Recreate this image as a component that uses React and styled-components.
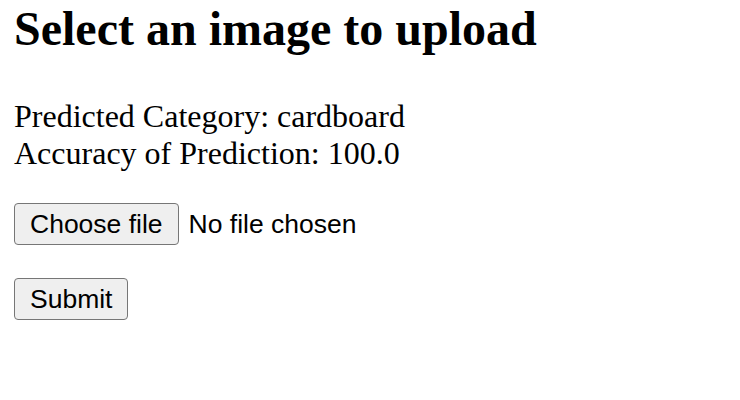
import React from 'react';
import styled, { createGlobalStyle } from 'styled-components';

const GlobalStyle = createGlobalStyle`
  html, body {
    margin: 0;
    background: #ffffff;
  }
  body {
    padding: 0 14px;
    font-family: "Liberation Serif", "Times New Roman", serif;
    color: #000000;
  }
`;

const Title = styled.h1`
  margin: 0;
  padding-top: 2px;
  font-size: 48px;
  font-weight: bold;
  line-height: 54px;
`;

const Result = styled.div`
  margin-top: 42px;
  font-size: 32px;
  line-height: 37px;
`;

const UploadForm = styled.form`
  display: flex;
  flex-direction: column;
  align-items: flex-start;
  gap: 33px;
  margin-top: 31px;
`;

const FileRow = styled.div`
  display: flex;
  align-items: center;
  gap: 10px;
`;

const HiddenInput = styled.input`
  display: none;
`;

const Button = styled.button`
  height: 42px;
  padding: 0 15px;
  font-family: "Liberation Sans", Arial, sans-serif;
  font-size: 26.5px;
  color: #000000;
  background: #efefef;
  border: 1px solid #767676;
  border-radius: 4px;
  cursor: pointer;
`;

const FileStatus = styled.span`
  font-family: "Liberation Sans", Arial, sans-serif;
  font-size: 26.5px;
`;

export default function App() {
  const inputRef = React.useRef(null);
  const [fileName, setFileName] = React.useState('');

  return (
    <>
      <GlobalStyle />
      <Title>Select an image to upload</Title>
      <Result>
        Predicted Category: cardboard
        <br />
        Accuracy of Prediction: 100.0
      </Result>
      <UploadForm onSubmit={(e) => e.preventDefault()}>
        <FileRow>
          <HiddenInput
            ref={inputRef}
            type="file"
            onChange={(e) => setFileName(e.target.files[0] ? e.target.files[0].name : '')}
          />
          <Button type="button" onClick={() => inputRef.current.click()}>
            Choose file
          </Button>
          <FileStatus>{fileName || 'No file chosen'}</FileStatus>
        </FileRow>
        <Button type="submit">Submit</Button>
      </UploadForm>
    </>
  );
}
